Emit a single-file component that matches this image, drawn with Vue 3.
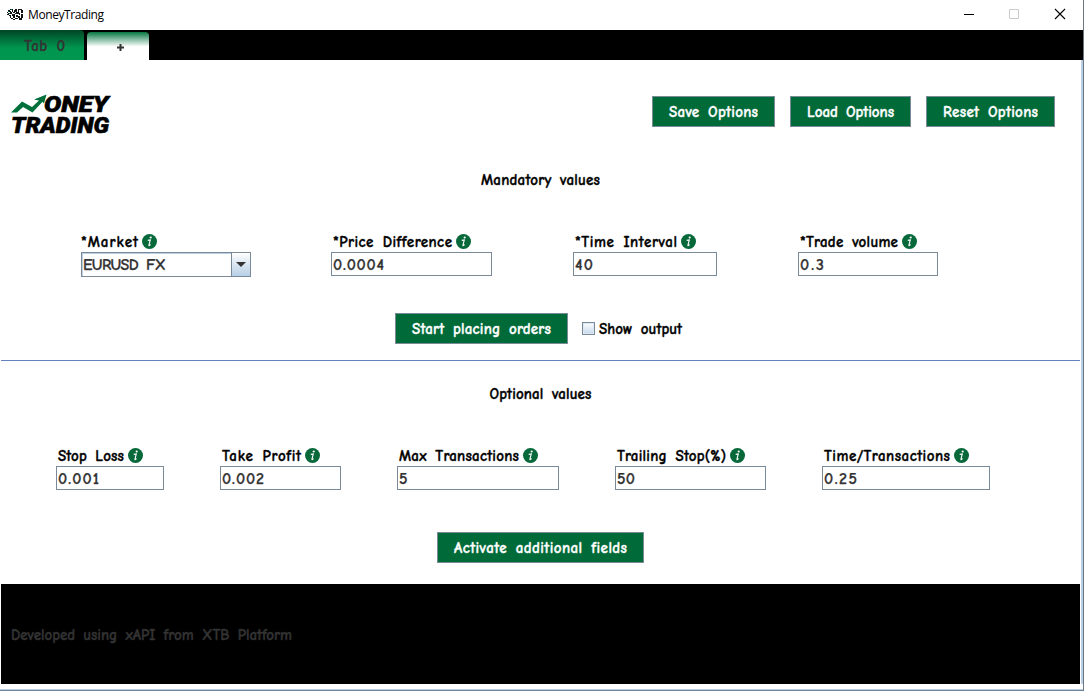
<script setup>
const vFit = {
  mounted(el, { value }) {
    const gaps = Math.max(1, el.textContent.length - 1)
    const natural = el.getBoundingClientRect().width
    const spacing = el.textContent.length > 1 ? (value - natural) / gaps : 0
    el.style.letterSpacing = `${spacing}px`
    el.style.width = `${value}px`
  },
}

const actions = [
  { text: 'Save Options', w: 123, tw: 89 },
  { text: 'Load Options', w: 121, tw: 87 },
  { text: 'Reset Options', w: 129, tw: 95 },
]

const mandatory = [
  { label: '*Market', value: 'EURUSD FX', gap: 81, w: 170, lw: 57, vw: 83, select: true },
  { label: '*Price Difference', value: '0.0004', gap: 80, w: 161, lw: 119, vw: 51 },
  { label: '*Time Interval', value: '40', gap: 81, w: 144, lw: 102, vw: 18 },
  { label: '*Trade volume', value: '0.3', gap: 81, w: 140, lw: 98, vw: 24 },
]

const optional = [
  { label: 'Stop Loss', value: '0.001', gap: 56, w: 108, lw: 66, vw: 41 },
  { label: 'Take Profit', value: '0.002', gap: 56, w: 121, lw: 79, vw: 42 },
  { label: 'Max Transactions', value: '5', gap: 56, w: 162, lw: 120, vw: 9 },
  { label: 'Trailing Stop(%)', value: '50', gap: 56, w: 151, lw: 109, vw: 18 },
  { label: 'Time/Transactions', value: '0.25', gap: 56, w: 168, lw: 126, vw: 33 },
]

const rows = [
  { name: 'mandatory', fields: mandatory },
  { name: 'optional', fields: optional },
]
</script>

<template>
  <div class="window">
    <header class="titlebar">
      <svg class="app-icon" width="16" height="11" viewBox="0 0 16 11" shape-rendering="crispEdges">
        <path fill="#111" d="M3 0h3v1H3zM8 0h2v1H8zM11 0h4v1h-4zM1 1h2v1H1zM5 1h1v2H5zM7 1h3v2H7zM11 1h1v2h-1zM14 1h2v3h-2zM2 2h2v1H2zM0 3h1v1H0zM3 3h2v2H3zM6 3h2v1H6zM9 3h3v2H9zM1 4h1v2H1zM5 5h3v2H5zM8 4h1v1H8zM12 4h1v2h-1zM14 5h2v4h-2zM0 5h1v1H0zM2 6h2v1H2zM9 6h2v2H9zM3 7h1v2H3zM6 7h2v2H6zM11 7h2v2h-2zM4 9h2v1H4zM8 9h3v1H8zM12 9h3v2h-3zM6 10h2v1H6z"/>
        <path fill="#087944" d="M1 2h1v1H1zM4 0h1v1H4zM2 4h1v1H2z"/>
      </svg>
      <span v-fit="76" class="title">MoneyTrading</span>
      <svg class="controls" width="104" height="12" viewBox="0 0 104 12">
        <path d="M1 6.500h10" stroke="#000"/>
        <path d="M46.500 1.500h9v9h-9z" fill="none" stroke="#ccc"/>
        <path d="M92 1l10 10M102 1l-10 10" stroke="#000" stroke-width="1.100"/>
      </svg>
    </header>

    <nav class="tabs">
      <div class="tab first"><span v-fit="41">Tab 0</span></div>
      <div class="tab add">
        <svg width="7" height="7" viewBox="0 0 7 7"><path d="M3.500 0v7M0 3.500h7" stroke="#333" stroke-width="2"/></svg>
      </div>
    </nav>

    <main class="panel">
      <section class="top">
        <svg class="logo" width="104" height="44" viewBox="0 0 104 44">
          <path fill="#006f3b" d="M0 19.500L11 8.500L21 14L28 7.500L23 6.500L35.500 1.500L33 10.500L31.500 8.800L21.500 19.500L12 14L6 19.500Z"/>
          <g class="logo-text">
            <text x="33" y="19" textLength="64.500" lengthAdjust="spacingAndGlyphs">ONEY</text>
            <text x="0" y="39.500" textLength="98" lengthAdjust="spacingAndGlyphs">TRADING</text>
          </g>
        </svg>
        <div class="actions">
          <button v-for="a in actions" :key="a.text" :style="{ width: a.w + 'px' }"><span v-fit="a.tw">{{ a.text }}</span></button>
        </div>
      </section>

      <template v-for="row in rows" :key="row.name">
        <section :class="['group', row.name]">
          <h2><span v-if="row.name === 'mandatory'" v-fit="119">Mandatory values</span><span v-else v-fit="102">Optional values</span></h2>
          <div class="fields">
            <div v-for="f in row.fields" :key="f.label" class="field" :style="{ width: f.w + 'px', marginLeft: f.gap + 'px' }">
              <label :class="{ flush: f.select }">
                <span v-fit="f.lw">{{ f.label }}</span>
                <svg class="info" width="15" height="15" viewBox="0 0 15 15">
                  <circle cx="7.500" cy="7.500" r="7.500" fill="#07683a"/>
                  <circle cx="8.700" cy="3.500" r="1.100" fill="#fff"/>
                  <path d="M5.700 6.400L8.300 5.900L6.900 11.400Q7 12.100 8.700 10.700" fill="none" stroke="#fff" stroke-width="1.100"/>
                </svg>
              </label>
              <div :class="['input', { select: f.select }]">
                <span v-fit="f.vw">{{ f.value }}</span>
                <i v-if="f.select" class="arrow"><svg width="10" height="5" viewBox="0 0 10 5"><path d="M0 0h10L5 5z" fill="#333"/></svg></i>
              </div>
            </div>
          </div>
          <div class="submit">
            <template v-if="row.name === 'mandatory'">
              <button class="start"><span v-fit="139">Start placing orders</span></button>
              <i class="checkbox"></i>
              <span v-fit="83">Show output</span>
            </template>
            <button v-else class="activate"><span v-fit="173">Activate additional fields</span></button>
          </div>
        </section>
      </template>
    </main>

    <footer><span v-fit="281">Developed using xAPI from XTB Platform</span></footer>
  </div>
</template>

<style>
body { background: #fff; overflow: hidden; }
</style>

<style scoped>
.window {
  box-sizing: border-box;
  width: 1084px;
  height: 691px;
  background: #fff;
  border-right: 1px solid #6c7680;
  border-bottom: 1px solid #6f8497;
  box-shadow: inset 0 -1px #b8cfe5;
  font: bold 15px/20px "Comic Sans MS", "Comic Neue", "Noto Sans", sans-serif;
  color: #000;
  -webkit-text-stroke: .35px currentColor;
}
span { display: inline-block; white-space: nowrap; word-spacing: 3px; flex: none; }
svg { display: block; flex: none; }
.titlebar { height: 30px; display: flex; align-items: center; box-sizing: border-box; padding: 0 16px 2px 7px; }
.title { margin-left: 5px; padding-top: 2px; font: 12px/18px "Segoe UI", "Open Sans", sans-serif; -webkit-text-stroke: 0; }
.controls { margin-left: auto; }
.tabs { height: 30px; background: #000; display: flex; align-items: flex-end; gap: 3px; color: #333; }
.tab { box-sizing: border-box; }
.first { width: 84px; height: 30px; padding: 6px 0 0 24px; border-radius: 0 4px 0 0; background: linear-gradient(#004525, #009650 60%); }
.add { width: 62px; height: 28px; padding: 12px 0 0 30px; border-radius: 4px 4px 0 0; background: linear-gradient(#087743, #fff 52%); }
.panel { height: 524px; box-sizing: border-box; border-right: 2px solid #b8cfe5; }
.top { display: flex; height: 104px; box-sizing: border-box; padding: 33px 26px 0 11px; justify-content: space-between; }
.logo { overflow: visible; }
.logo-text { font: italic 900 22.5px Roboto, "Liberation Sans", sans-serif; fill: #000; -webkit-text-stroke: 0; stroke: #000; stroke-width: .6px; }
.actions { display: flex; gap: 15px; padding-top: 3px; }
button { box-sizing: border-box; height: 31px; padding: 1px 0 0; border: 1px solid #7a8a99; background: #006a38; color: #fff; font: inherit; display: flex; align-items: center; justify-content: center; flex: none; }
.group { box-sizing: border-box; }
.mandatory { height: 197px; margin: 0 1px; border-bottom: 1px solid #6382bf; padding-top: 6px; }
.optional { padding-top: 23px; margin: 0 1px; }
h2 { height: 20px; margin: 0; font: inherit; text-align: center; }
h2 span { text-align: left; }
.fields { display: flex; margin-top: 42px; margin-left: -1px; }
.field { flex: none; }
label { display: flex; align-items: flex-start; height: 20px; padding-left: 2px; }
label.flush { padding-left: 0; }
label span { margin-right: 4px; }
.info { margin-top: 2px; }
.input { box-sizing: border-box; height: 24px; border: 1px solid #7a8a99; padding: 1px 0 0 1px; display: flex; align-items: center; color: #333; font-size: 16px; line-height: 22px; -webkit-text-stroke-width: .25px; }
.select { height: 25px; padding-top: 0; box-shadow: inset 1px 1px #b8cfe5; }
.arrow { box-sizing: border-box; width: 19px; height: 23px; margin-left: auto; border-left: 1px solid #7a8a99; display: grid; place-items: center; background: linear-gradient(#fff, #e4edf6 35%, #b8cfe5); }
.submit { display: flex; justify-content: center; align-items: center; height: 31px; margin-top: 36px; }
.optional .submit { margin-top: 42px; }
.start { width: 173px; }
.submit > span { margin-left: 4px; }
.submit .start { margin-left: -4px; }
.checkbox { box-sizing: border-box; width: 13px; height: 13px; border: 1px solid #7a8a99; margin-left: 14px; background: linear-gradient(#fff, #c4d8ec); box-shadow: inset 0 0 0 1px #dce8f3; }
.activate { width: 207px; }
footer { box-sizing: border-box; width: 1079px; height: 100px; margin-left: 1px; padding: 41px 0 0 10px; background: #000; color: #333; box-shadow: 1px 0 #fff, 3px 0 #b8cfe5; }
</style>
